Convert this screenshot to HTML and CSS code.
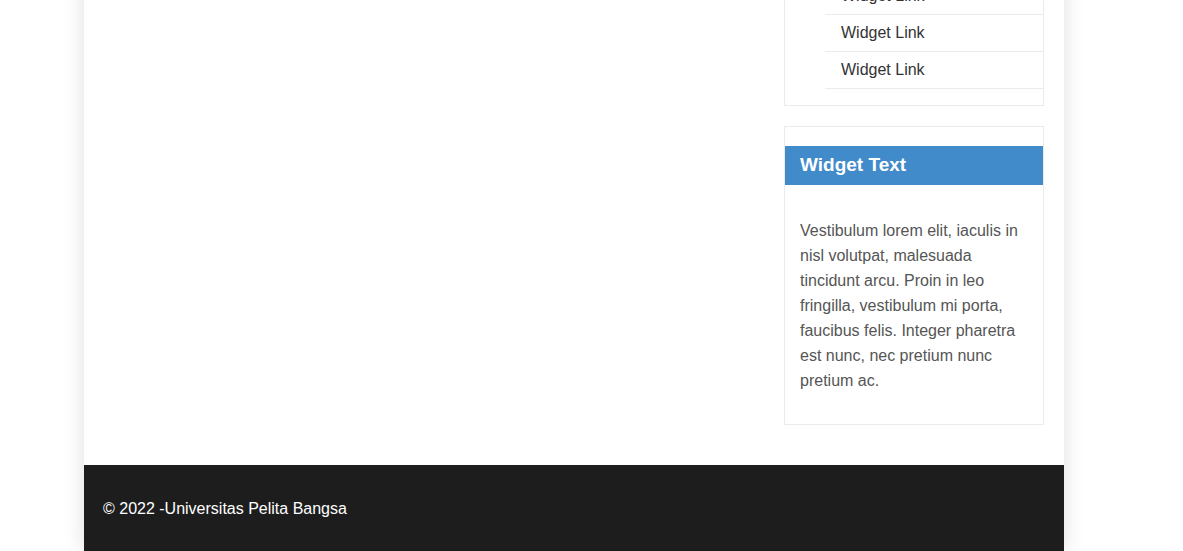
FILE: index.html
```html
<!DOCTYPE html>
<html lang="id">
<head>
<meta charset="utf-8">
<title>Universitas Pelita Bangsa</title>
<link rel="stylesheet" href="styles.css">
</head>
<body>
<div class="page">
  <div class="content">
    <main class="main"></main>
    <aside class="sidebar">
      <section class="widget widget-links">
        <ul class="link-list">
          <li><a href="#">Widget Link</a></li>
          <li><a href="#">Widget Link</a></li>
          <li><a href="#">Widget Link</a></li>
        </ul>
      </section>
      <section class="widget widget-text">
        <h3 class="widget-title">Widget Text</h3>
        <p class="widget-body">Vestibulum lorem elit, iaculis in nisl volutpat, malesuada tincidunt arcu. Proin in leo fringilla, vestibulum mi porta, faucibus felis. Integer pharetra est nunc, nec pretium nunc pretium ac.</p>
      </section>
    </aside>
  </div>
  <footer class="footer">© 2022 -Universitas Pelita Bangsa</footer>
</div>
</body>
</html>
```
FILE: styles.css
```css
html, body {
  margin: 0;
  padding: 0;
  background: #ffffff;
  overflow: hidden;
}
body {
  font-family: "Liberation Sans", Arial, sans-serif;
  font-size: 16px;
  color: #333;
}
.page {
  width: 980px;
  margin: -23px 0 0 84px;
  background: #fff;
  box-shadow: 0 0 20px rgba(0, 0, 0, 0.13);
}
.content {
  display: grid;
  grid-template-columns: 1fr 260px;
  gap: 20px;
  padding: 0 20px 40px;
}
.sidebar {
  display: flex;
  flex-direction: column;
  gap: 20px;
}
.widget {
  border: 1px solid #ebebeb;
  background: #fff;
}
.link-list {
  list-style: none;
  margin: 0 0 16px 40px;
  padding: 0;
}
.link-list li {
  border-bottom: 1px solid #ebebeb;
}
.link-list a {
  display: block;
  padding: 8px 16px;
  line-height: 20px;
  color: #333;
  text-decoration: none;
}
.widget-text {
  padding-top: 19px;
}
.widget-title {
  margin: 0;
  background: #428bca;
  color: #fff;
  font-size: 19px;
  font-weight: bold;
  line-height: 24px;
  padding: 7px 15px 8px;
}
.widget-body {
  margin: 33px 15px 31px;
  line-height: 25px;
  color: #555;
}
.footer {
  background: #1d1d1d;
  color: #fff;
  line-height: 20px;
  padding: 34px 19px 32px;
}
```
